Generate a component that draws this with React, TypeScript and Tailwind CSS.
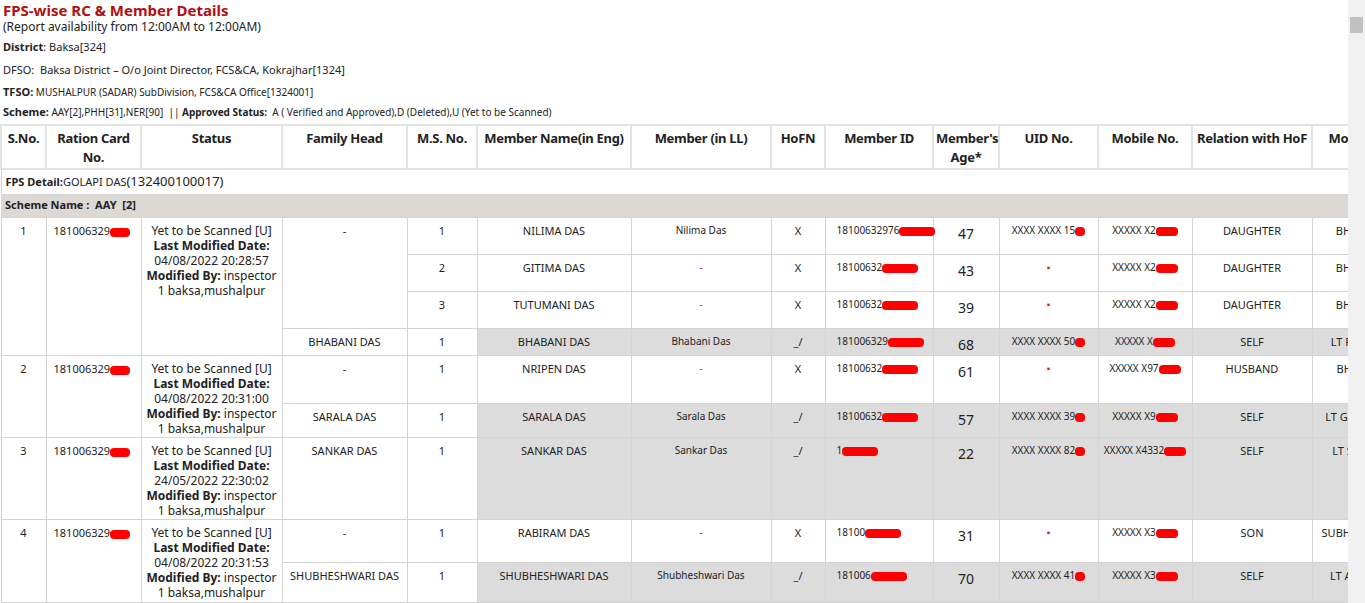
import React from "react";

const R = ({ w = 28 }: { w?: number }) => (
  <span className="inline-block h-[9px] -mb-[1px] rounded-sm bg-[#ff0000] align-middle" style={{ width: w }} />
);

type M = {
  ms: string; name: string; ll: string; hofn: string; id: string; age: string;
  uid: React.ReactNode; mob: string; rel: string; mother: string; head?: boolean; h: number;
};

type G = { sno: string; rc: string; date: string; fh: string; fhSpan: number; members: M[] };

const dash = <span className="text-[#e02020]">-</span>;
const uidDot = <span className="text-[#e02020]">▪</span>;

const groups: G[] = [
  {
    sno: "1", rc: "181006329", date: "04/08/2022 20:28:57", fh: "BHABANI DAS", fhSpan: 3,
    members: [
      { ms: "1", name: "NILIMA DAS", ll: "Nilima Das", hofn: "X", id: "18100632976", age: "47", uid: <>XXXX XXXX 15<R w={10} /></>, mob: "XXXXX X2", rel: "DAUGHTER", mother: "BHABANI DAS", h: 37 },
      { ms: "2", name: "GITIMA DAS", ll: "-", hofn: "X", id: "18100632", age: "43", uid: uidDot, mob: "XXXXX X2", rel: "DAUGHTER", mother: "BHABANI DAS", h: 37 },
      { ms: "3", name: "TUTUMANI DAS", ll: "-", hofn: "X", id: "18100632", age: "39", uid: uidDot, mob: "XXXXX X2", rel: "DAUGHTER", mother: "BHABANI DAS", h: 37 },
      { ms: "1", name: "BHABANI DAS", ll: "Bhabani Das", hofn: "_/", id: "181006329", age: "68", uid: <>XXXX XXXX 50<R w={10} /></>, mob: "XXXXX X", rel: "SELF", mother: "LT RAMESH DAS", head: true, h: 25 },
    ],
  },
  {
    sno: "2", rc: "181006329763", date: "04/08/2022 20:31:00", fh: "SARALA DAS", fhSpan: 1,
    members: [
      { ms: "1", name: "NRIPEN DAS", ll: "-", hofn: "X", id: "18100632", age: "61", uid: uidDot, mob: "XXXXX X97", rel: "HUSBAND", mother: "BHAIRAB DAS", h: 48 },
      { ms: "1", name: "SARALA DAS", ll: "Sarala Das", hofn: "_/", id: "18100632", age: "57", uid: <>XXXX XXXX 39<R w={10} /></>, mob: "XXXXX X9", rel: "SELF", mother: "LT GUNARAM DAS", head: true, h: 34 },
    ],
  },
  {
    sno: "3", rc: "181006329", date: "24/05/2022 22:30:02", fh: "SANKAR DAS", fhSpan: 0,
    members: [
      { ms: "1", name: "SANKAR DAS", ll: "Sankar Das", hofn: "_/", id: "1", age: "22", uid: <>XXXX XXXX 82<R w={10} /></>, mob: "XXXXX X4332", rel: "SELF", mother: "LT SURESH DAS", head: true, h: 82 },
    ],
  },
  {
    sno: "4", rc: "181006329", date: "04/08/2022 20:31:53", fh: "SHUBHESHWARI DAS", fhSpan: 1,
    members: [
      { ms: "1", name: "RABIRAM DAS", ll: "-", hofn: "X", id: "18100", age: "31", uid: uidDot, mob: "XXXXX X3", rel: "SON", mother: "SUBHESHWARI DAS", h: 43 },
      { ms: "1", name: "SHUBHESHWARI DAS", ll: "Shubheshwari Das", hofn: "_/", id: "181006", age: "70", uid: <>XXXX XXXX 41<R w={10} /></>, mob: "XXXXX X3", rel: "SELF", mother: "LT ANANDA DAS", head: true, h: 40 },
    ],
  },
];

const widths = [45, 95, 141, 125, 70, 154, 140, 54, 108, 66, 99, 94, 120, 120];
const heads = ["S.No.", "Ration Card No.", "Status", "Family Head", "M.S. No.", "Member Name(in Eng)", "Member (in LL)", "HoFN", "Member ID", "Member's Age*", "UID No.", "Mobile No.", "Relation with HoF", "Mother Name"];

const td = "border border-[#d4d4d4] align-top px-1 pt-[5px]";

export default function App() {
  return (
    <div className="flex h-[603px] w-[1365px] overflow-hidden bg-white text-[#222] [font-family:'DejaVu_Sans','Liberation_Sans',sans-serif]">
      <div className="w-[1348px] overflow-hidden">
        <div className="px-[3px] pt-[1px]">
          <h1 className="text-[15px] font-bold leading-[18px] text-[#b30f0f]">FPS-wise RC &amp; Member Details</h1>
          <p className="text-[12px] leading-[16px]">(Report availability from 12:00AM to 12:00AM)</p>
          <p className="mt-[5px] text-[11px] leading-[14px]"><b>District</b>: Baksa[324]</p>
          <p className="mt-[9px] text-[11px] leading-[14px]">DFSO:&nbsp; Baksa District – O/o Joint Director, FCS&amp;CA, Kokrajhar[1324]</p>
          <p className="mt-[8px] text-[10px] leading-[14px]"><b className="text-[11px]">TFSO:</b> MUSHALPUR (SADAR) SubDivision, FCS&amp;CA Office[1324001]</p>
          <p className="mt-[6px] text-[10px] leading-[14px]"><b className="text-[11px]">Scheme:</b> AAY[2],PHH[31],NER[90] &nbsp;|| <b className="text-[10px]">Approved Status:</b>&nbsp; A ( Verified and Approved),D (Deleted),U (Yet to be Scanned)</p>
        </div>
        <table className="mt-[5px] table-fixed border-collapse text-[11px] [font-family:'Liberation_Sans',Arial,sans-serif]" style={{ width: widths.reduce((a, b) => a + b, 0) }}>
          <colgroup>
            {widths.map((w, i) => <col key={i} style={{ width: w }} />)}
          </colgroup>
          <thead>
            <tr className="h-[44px]">
              {heads.map((h) => (
                <th key={h} className="border-2 border-[#e2e2e2] px-[2px] pt-[3px] align-top text-[13px] font-bold leading-[19px] tracking-[-0.3px] text-[#222] [font-family:'Liberation_Sans',Arial,sans-serif]">{h}</th>
              ))}
            </tr>
          </thead>
          <tbody>
            <tr className="h-[25px]">
              <td colSpan={14} className="border border-[#d4d4d4] px-1 text-[11px]"><b>FPS Detail:</b>GOLAPI DAS<span className="text-[13px]">(132400100017)</span></td>
            </tr>
            <tr className="h-[23px] bg-[#dcd8d4]">
              <td colSpan={14} className="px-1 text-[11px] font-bold">Scheme Name :&nbsp; AAY&nbsp; [2]</td>
            </tr>
            {groups.map((g) =>
              g.members.map((m, i) => {
                const gray = m.head ? "bg-[#dcdcdc]" : "";
                return (
                  <tr key={g.sno + i} style={{ height: m.h }}>
                    {i === 0 && (
                      <>
                        <td rowSpan={g.members.length} className={`${td} text-center text-[11px]`}>{g.sno}</td>
                        <td rowSpan={g.members.length} className={`${td} pl-[7px]`}>{g.rc.slice(0, 9)}<R w={20} /></td>
                        <td rowSpan={g.members.length} className={`${td} text-center text-[12px] leading-[15px]`}>
                          Yet to be Scanned [U]<br />
                          <b>Last Modified Date:</b><br />
                          {g.date}<br />
                          <b>Modified By:</b> inspector<br />1 baksa,mushalpur
                        </td>
                      </>
                    )}
                    {!m.head && i === 0 && g.fhSpan > 0 && (
                      <td rowSpan={g.fhSpan} className={`${td} text-center`}>-</td>
                    )}
                    {m.head && <td className={`${td} text-center`}>{g.fh}</td>}
                    <td className={`${td} text-center`}>{m.ms}</td>
                    <td className={`${td} text-center ${gray}`}>{m.name}</td>
                    <td className={`${td} text-center text-[10px] ${gray}`}>{m.ll === "-" ? dash : m.ll}</td>
                    <td className={`${td} text-center ${gray}`}>{m.hofn}</td>
                    <td className={`${td} pl-[11px] text-[10px] ${gray} whitespace-nowrap`}>{m.id}<R w={36} /></td>
                    <td className={`${td} pt-[3px] text-center text-[14px] ${gray}`}>{m.age}</td>
                    <td className={`${td} text-center text-[10px] ${gray} whitespace-nowrap`}>{m.uid}</td>
                    <td className={`${td} text-center text-[10px] ${gray} whitespace-nowrap`}>{m.mob}<R w={22} /></td>
                    <td className={`${td} text-center ${gray}`}>{m.rel}</td>
                    <td className={`${td} text-center ${gray} whitespace-nowrap`}>{m.mother}</td>
                  </tr>
                );
              })
            )}
          </tbody>
        </table>
      </div>
      <div className="flex w-[17px] shrink-0 flex-col bg-[#f1f1f1]">
        <div className="h-[17px]" />
        <div className="mx-[2px] h-[16px] bg-[#c1c1c1]" />
      </div>
    </div>
  );
}
